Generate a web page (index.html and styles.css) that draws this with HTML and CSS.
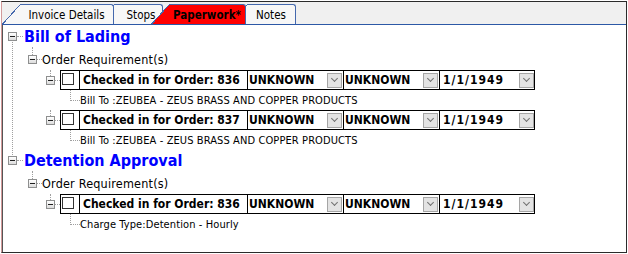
FILE: index.html
```html
<!DOCTYPE html>
<html lang="en">
  <head>
    <meta charset="UTF-8" />
    <title>Paperwork</title>
    <link rel="stylesheet" href="styles.css">
  </head>
  <body>
    <div class="window">
      <div class="tabs">
        <div class="tab tab-invoice">Invoice Details</div>
        <div class="tab tab-stops">Stops</div>
        <div class="tab tab-paper">Paperwork*</div>
        <div class="tab tab-notes">Notes</div>
      </div>

      <div class="tree">
        <div class="section">
          <div class="node head"><span class="exp"></span><span class="title">Bill of Lading</span></div>
          <div class="node group"><span class="exp"></span><span class="label">Order Requirement(s)</span></div>
          <div class="node req">
            <span class="exp"></span>
            <div class="reqrow">
              <div class="cell check"><span class="box"></span></div>
              <div class="cell name">Checked in for Order: 836</div>
              <div class="cell combo"><span>UNKNOWN</span><span class="drop"></span></div>
              <div class="cell combo"><span>UNKNOWN</span><span class="drop"></span></div>
              <div class="cell combo date"><span class="val">1/1/1949</span><span class="drop"></span></div>
            </div>
          </div>
          <div class="node info">Bill To :ZEUBEA - ZEUS BRASS AND COPPER PRODUCTS</div>
          <div class="node req">
            <span class="exp"></span>
            <div class="reqrow">
              <div class="cell check"><span class="box"></span></div>
              <div class="cell name">Checked in for Order: 837</div>
              <div class="cell combo"><span>UNKNOWN</span><span class="drop"></span></div>
              <div class="cell combo"><span>UNKNOWN</span><span class="drop"></span></div>
              <div class="cell combo date"><span class="val">1/1/1949</span><span class="drop"></span></div>
            </div>
          </div>
          <div class="node info">Bill To :ZEUBEA - ZEUS BRASS AND COPPER PRODUCTS</div>
        </div>

        <div class="section">
          <div class="node head"><span class="exp"></span><span class="title">Detention Approval</span></div>
          <div class="node group"><span class="exp"></span><span class="label">Order Requirement(s)</span></div>
          <div class="node req">
            <span class="exp"></span>
            <div class="reqrow">
              <div class="cell check"><span class="box"></span></div>
              <div class="cell name">Checked in for Order: 836</div>
              <div class="cell combo"><span>UNKNOWN</span><span class="drop"></span></div>
              <div class="cell combo"><span>UNKNOWN</span><span class="drop"></span></div>
              <div class="cell combo date"><span class="val">1/1/1949</span><span class="drop"></span></div>
            </div>
          </div>
          <div class="node info">Charge Type:Detention - Hourly</div>
        </div>
      </div>
    </div>
  </body>
</html>
```
FILE: styles.css
```css
* {
  margin: 0;
  padding: 0;
  box-sizing: border-box;
}

body {
  background: #fff;
  color: #000;
  font-family: "DejaVu Sans Condensed", "DejaVu Sans", sans-serif;
  font-stretch: condensed;
}

.window {
  margin: 1px;
  width: 626px;
  height: 252px;
  border: 1px solid #2b2b2b;
  border-left-color: #d29a9a;
  box-shadow: inset 1px 0 0 #555;
  display: flex;
  flex-direction: column;
  overflow: hidden;
}

/* tab strip */
.tabs {
  display: flex;
  height: 23px;
  padding: 2px 0 0 18px;
  background: #f0f0f0;
  border-bottom: 1px solid #2c58a6;
}

.tab {
  --tab-bg: #f7f7f7;
  position: relative;
  height: 20px;
  border: 1px solid #4468ad;
  border-left: 0;
  border-bottom: 0;
  border-top-right-radius: 3px;
  background: var(--tab-bg);
  font-size: 11.5px;
  line-height: 16px;
  padding-top: 2px;
  text-align: center;
}

/* slanted left side of each tab */
.tab::before {
  content: "";
  position: absolute;
  left: -18px;
  top: -1px;
  bottom: 0;
  width: 18px;
  background: linear-gradient(
    to top left,
    var(--tab-bg) calc(50% - 1px),
    #4468ad calc(50% - 1px),
    #4468ad 50%,
    transparent 50%
  );
}

.tab-invoice {
  width: 94px;
  z-index: 4;
}

.tab-stops {
  width: 49px;
  z-index: 3;
  padding-left: 6px;
}

.tab-paper {
  --tab-bg: #ff0000;
  width: 77px;
  margin-left: 6px;
  z-index: 5;
  font-weight: bold;
}

.tab-notes {
  width: 49px;
  margin-left: 1px;
  z-index: 2;
}

/* tree */
.tree {
  flex: 1;
}

.section {
  position: relative;
}

.section + .section {
  margin-top: -1px;
}

/* root line between the two top nodes */
.section:first-child::before {
  content: "";
  position: absolute;
  left: 10px;
  top: 15px;
  bottom: -5px;
  border-left: 1px dotted #a0a0a0;
}

.node {
  position: relative;
  display: flex;
  align-items: center;
  height: 20px;
}

.head {
  height: 22px;
}

.group {
  margin-top: 2px;
}

.req {
  margin-top: 1px;
}

.info + .req {
  margin-top: 0;
}

/* expander box */
.exp {
  position: relative;
  flex: none;
  width: 9px;
  height: 9px;
  border: 1px solid #8e8f8f;
  background: linear-gradient(#1f1f1f, #1f1f1f) center / 5px 1px no-repeat,
    linear-gradient(#fff, #dcdcdc);
}

.exp::after {
  content: "";
  position: absolute;
  left: 8px;
  top: 3px;
  width: 5px;
  border-top: 1px dotted #a0a0a0;
}

.head .exp {
  margin-left: 6px;
}

.head .exp::after {
  width: 6px;
}

.group .exp {
  margin-left: 26px;
}

.group .exp::before,
.req .exp::before {
  content: "";
  position: absolute;
  left: 3px;
  top: -9px;
  height: 8px;
  border-left: 1px dotted #a0a0a0;
}

.req .exp {
  margin-left: 44px;
}

.req .exp::before {
  top: -7px;
  height: 6px;
}

.title {
  margin-left: 7px;
  font-size: 16px;
  font-weight: bold;
  color: #0000ff;
}

.label {
  margin-left: 5px;
  font-size: 12.5px;
  letter-spacing: 0.2px;
}

/* requirement row */
.reqrow {
  display: flex;
  height: 20px;
  margin-left: 5px;
  border: 1px solid #000;
  font-size: 12px;
  font-weight: bold;
}

.cell {
  display: flex;
  align-items: center;
  border-right: 1px solid #000;
}

.cell:last-child {
  border-right: 0;
}

.check {
  width: 19px;
  align-items: flex-start;
  padding: 2px 0 0 1px;
}

.box {
  width: 12px;
  height: 12px;
  border: 1px solid #333;
  background: #fff;
}

.name {
  width: 168px;
  padding-left: 3px;
}

.combo {
  width: 96px;
  padding: 0 1px 0 1px;
  justify-content: space-between;
}

.date {
  width: 94px;
  padding: 0 0 0 3px;
}

.date .val {
  letter-spacing: 1px;
}

.drop {
  position: relative;
  width: 15px;
  height: 15px;
  border: 1px solid #a5a5a5;
  background: #e3e3e3;
}

.drop::after {
  content: "";
  position: absolute;
  left: 4px;
  top: 2px;
  width: 4px;
  height: 4px;
  border-right: 1px solid #707070;
  border-bottom: 1px solid #707070;
  transform: rotate(45deg);
}

/* leaf text with its connector */
.info {
  padding-left: 78px;
  font-size: 11px;
  letter-spacing: 0.1px;
}

.info::before {
  content: "";
  position: absolute;
  left: 68px;
  top: 0;
  width: 9px;
  height: 10px;
  border-left: 1px dotted #a0a0a0;
  border-bottom: 1px dotted #a0a0a0;
}
```
